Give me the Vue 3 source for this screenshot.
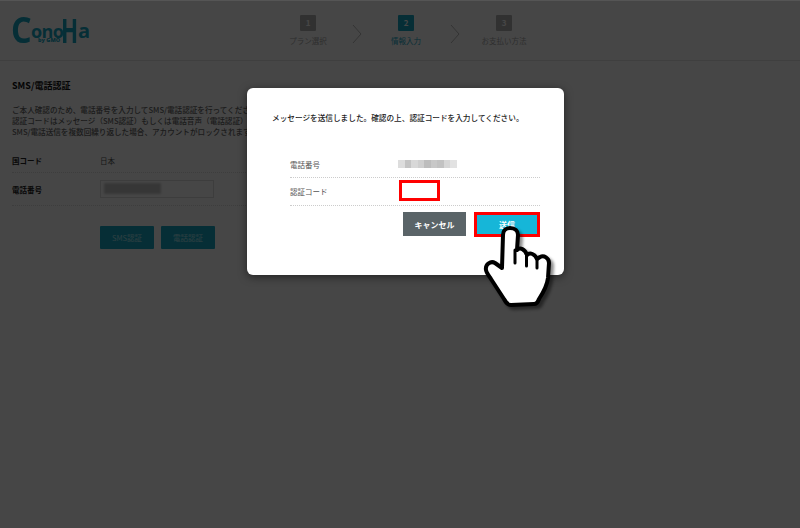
<script setup>
const steps = [
  { no: 1, label: 'プラン選択' },
  { no: 2, label: '情報入力', active: true },
  { no: 3, label: 'お支払い方法' },
]
const phoneBlocks = ['#ddd', '#c4c4c4', '#d8d8d8', '#cfcfcf', '#bdbdbd', '#c8c8c8', '#c2c2c2', '#d6d6d6', '#e2e2e2']
</script>

<template>
  <div class="page">
    <header class="header">
      <div class="logo">
        <span class="logo-c">C</span><span class="logo-ono">ono</span><span class="logo-h">H</span><span class="logo-a">a</span>
        <span class="logo-by">by GMO</span>
      </div>
      <div class="steps">
        <template v-for="(s, i) in steps" :key="s.no">
          <div class="step" :class="{ active: s.active }">
            <div class="step-no">{{ s.no }}</div>
            <div class="step-label">{{ s.label }}</div>
          </div>
          <svg v-if="i < 2" class="chev" width="10" height="20" viewBox="0 0 10 20">
            <path d="M1 1 L9 10 L1 19" fill="none" stroke="#bbb" stroke-width="1" />
          </svg>
        </template>
      </div>
    </header>

    <main class="content">
      <h2 class="title">SMS/電話認証</h2>
      <p class="lead">
        ご本人確認のため、電話番号を入力してSMS/電話認証を行ってくださ<br>
        認証コードはメッセージ（SMS認証）もしくは電話音声（電話認証）<br>
        SMS/電話送信を複数回繰り返した場合、アカウントがロックされます
      </p>
      <div class="form">
        <div class="form-row first">
          <div class="form-label">国コード</div>
          <div class="form-value">日本</div>
        </div>
        <div class="form-row second">
          <div class="form-label">電話番号</div>
          <div class="input"><span class="input-blur"></span></div>
        </div>
      </div>
      <div class="auth-buttons">
        <button class="auth">SMS認証</button>
        <button class="auth">電話認証</button>
      </div>
    </main>

    <div class="overlay">
      <div class="modal">
        <p class="message">メッセージを送信しました。確認の上、認証コードを入力してください。</p>
        <div class="modal-rows">
          <div class="modal-row phone">
            <div class="modal-label">電話番号</div>
            <div class="blur-number">
              <span v-for="(c, i) in phoneBlocks" :key="i" :style="{ background: c }"></span>
            </div>
          </div>
          <div class="modal-row code">
            <div class="modal-label">認証コード</div>
            <div class="code-box"></div>
          </div>
        </div>
        <div class="modal-buttons">
          <button class="cancel">キャンセル</button>
          <button class="send">送信</button>
        </div>
      </div>
    </div>

    <svg class="hand" width="76" height="92" viewBox="0 0 76 92">
      <path class="hand-shadow" d="M30 6 C25.500 6 23 9 23 13 L22 46 L15 41 C11 38.500 5 42 6 48 C6.500 51 9 54 11 57 L24 77 C26 81 28 83 31 83 L54 82 C57 82 58 80 59 77 C63 71 67 64 68 56 L69 41 C69 36 64 33 60 35 L57 37 C55 32 50 30 47 33 C45 27 40 25 37 28 L38 13 C38 9 35 6 30 6 Z" />
      <path class="hand-body" d="M30 6 C25.500 6 23 9 23 13 L22 46 L15 41 C11 38.500 5 42 6 48 C6.500 51 9 54 11 57 L24 77 C26 81 28 83 31 83 L54 82 C57 82 58 80 59 77 C63 71 67 64 68 56 L69 41 C69 36 64 33 60 35 L57 37 C55 32 50 30 47 33 C45 27 40 25 37 28 L38 13 C38 9 35 6 30 6 Z" />
      <path class="hand-line" d="M35 28 L35 41 M46.500 33 L46.500 44 M57 37 L57 46" />
    </svg>
  </div>
</template>

<style scoped>
* {
  box-sizing: border-box;
  margin: 0;
  padding: 0;
}

.page {
  position: relative;
  width: 800px;
  height: 528px;
  overflow: hidden;
  background: #fff;
  font-family: "Noto Sans CJK JP", "Liberation Sans", sans-serif;
  color: #222;
  border-top: 1px solid #555;
}

.header {
  position: relative;
  height: 60px;
  border-bottom: 1px solid #e4e4e4;
}

.logo {
  position: absolute;
  left: 11px;
  top: 17px;
  width: 81px;
  height: 26px;
  display: flex;
  align-items: flex-start;
  font-family: "Open Sans", sans-serif;
  color: #16a9c6;
}

.logo span {
  display: block;
  flex: none;
}

.logo-c {
  width: 20px;
  font-size: 36px;
  line-height: 24px;
  font-weight: 700;
  transform-origin: left top;
  transform: scaleX(0.9);
}

.logo-ono {
  width: 30px;
  margin-top: 7px;
  font-size: 18px;
  line-height: 12px;
  font-weight: 700;
  letter-spacing: -0.6px;
}

.logo-h {
  width: 17px;
  font-size: 34px;
  line-height: 24px;
  font-weight: 700;
  transform-origin: left top;
  transform: scaleX(0.66);
}

.logo-a {
  width: 13px;
  margin-top: 7px;
  font-size: 20px;
  line-height: 12px;
  font-weight: 700;
}

.logo .logo-by {
  position: absolute;
  left: 27px;
  top: 20px;
  font-size: 5.500px;
  line-height: 5px;
  font-weight: 800;
  white-space: nowrap;
}

.steps {
  position: absolute;
  left: 277px;
  top: 14px;
  display: flex;
}

.step {
  width: 62px;
  display: flex;
  flex-direction: column;
  align-items: center;
  color: #aaa;
}

.step-no {
  width: 16px;
  height: 16px;
  background: #b4b4b4;
  color: #fff;
  border-radius: 1px;
  font-size: 8px;
  font-weight: 700;
  line-height: 16px;
  text-align: center;
}

.step-label {
  margin-top: 4px;
  font-size: 7.5px;
  line-height: 12px;
  white-space: nowrap;
}

.step.active {
  color: #16a9c6;
}

.step.active .step-no {
  background: #16a9c6;
}

.chev {
  margin: 9px 13px 0;
  flex: none;
}

.content {
  padding: 19px 12px 0;
}

.title {
  font-size: 9px;
  line-height: 12px;
  font-weight: 700;
  color: #111;
}

.lead {
  margin-top: 12px;
  font-size: 7.6px;
  line-height: 11px;
  font-weight: 500;
  color: #666;
  white-space: nowrap;
}

.form {
  margin-top: 12px;
  width: 260px;
}

.form-row {
  display: flex;
  align-items: center;
  border-bottom: 1px dotted #ddd;
  font-size: 7.5px;
}

.form-row.first {
  height: 24px;
}

.form-row.second {
  height: 33px;
}

.form-label {
  width: 88px;
  font-weight: 700;
  color: #222;
}

.form-value {
  color: #555;
}

.input {
  width: 114px;
  height: 18px;
  border: 1px solid #ddd;
  padding: 2px 3px;
}

.input-blur {
  display: block;
  width: 57px;
  height: 11px;
  background: #b8b8b8;
  opacity: 0.8;
  filter: blur(1px);
}

.auth-buttons {
  display: flex;
  gap: 7px;
  margin: 20px 0 0 88px;
}

.auth {
  width: 54px;
  height: 23px;
  border: none;
  border-radius: 1px;
  background: #16a9c6;
  color: #aee6ef;
  font-family: inherit;
  font-size: 7.5px;
}

.overlay {
  position: absolute;
  inset: -1px 0 0 0;
  background: rgba(0, 0, 0, 0.725);
  padding: 88px 0 0 247px;
}

.modal {
  width: 317px;
  height: 187px;
  background: #fff;
  border-radius: 6px;
  box-shadow: 0 2px 8px rgba(0, 0, 0, 0.5);
  padding: 24px 24px 0 25px;
}

.message {
  font-size: 7.65px;
  line-height: 12px;
  font-weight: 500;
  color: #222;
  white-space: nowrap;
}

.modal-rows {
  margin: 28px 0 0 18px;
}

.modal-row {
  display: flex;
  align-items: center;
  border-bottom: 1px dotted #ccc;
  font-size: 7.5px;
  color: #555;
}

.modal-row.phone {
  height: 26px;
}

.modal-row.code {
  height: 28px;
}

.modal-label {
  width: 110px;
}

.blur-number {
  display: flex;
  height: 8px;
  margin-top: -1px;
  margin-left: -2px;
}

.blur-number span {
  width: 6.500px;
  height: 8px;
}

.code-box {
  width: 41px;
  height: 21px;
  margin-left: -1px;
  margin-top: -3px;
  border: 3px solid #f00;
  background: #fff;
}

.modal-buttons {
  display: flex;
  justify-content: flex-end;
  align-items: flex-start;
  gap: 8px;
  margin-top: 6px;
}

.modal-buttons button {
  font-family: inherit;
  font-size: 8px;
  font-weight: 700;
  color: #fff;
  cursor: pointer;
}

.cancel {
  width: 63px;
  height: 24px;
  border: none;
  background: #5a6468;
}

.send {
  width: 66px;
  height: 25px;
  border: 3px solid #f00;
  background: #16b6d8;
}

.hand {
  position: absolute;
  left: 480px;
  top: 221px;
  overflow: visible;
}

.hand-body {
  fill: #fff;
  stroke: #000;
  stroke-width: 4;
  stroke-linejoin: round;
}

.hand-shadow {
  fill: #000;
  stroke: #000;
  stroke-width: 4;
  stroke-linejoin: round;
  opacity: 0.45;
  transform: translate(3px, 3px);
  filter: blur(1.500px);
}

.hand-line {
  fill: none;
  stroke: #000;
  stroke-width: 3;
  stroke-linecap: round;
}
</style>

<style>
html,
body {
  margin: 0;
  background: #464646;
}
</style>
